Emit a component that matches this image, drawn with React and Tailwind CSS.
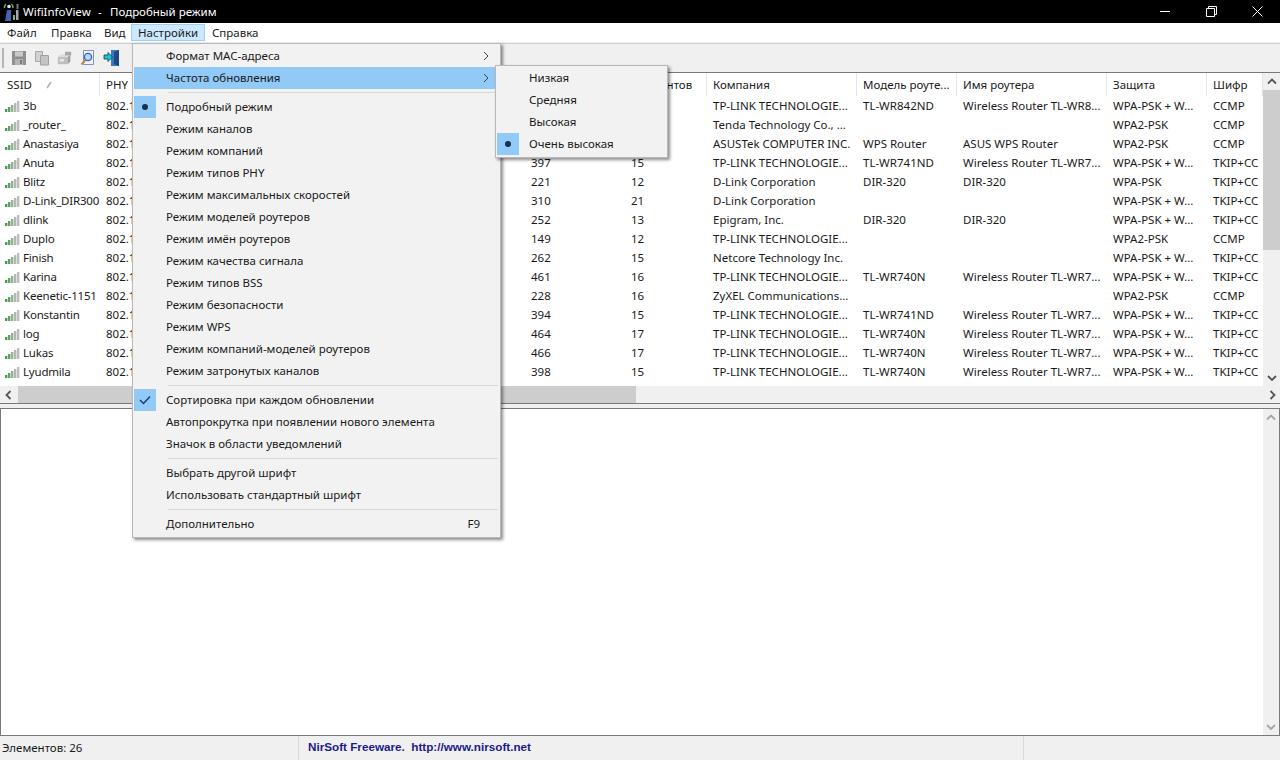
import React from 'react';

const rows = [
  ['3b','802.11n','', '', '', '', '', 'TP-LINK TECHNOLOGIE...','TL-WR842ND','Wireless Router TL-WR8...','WPA-PSK + W...','CCMP'],
  ['_router_','802.11n','', '', '', '', '', 'Tenda Technology Co., ...','','','WPA2-PSK','CCMP'],
  ['Anastasiya','802.11n','', '', '', '', '', 'ASUSTek COMPUTER INC.','WPS Router','ASUS WPS Router','WPA2-PSK','CCMP'],
  ['Anuta','802.11n','', '', '', '397','15','TP-LINK TECHNOLOGIE...','TL-WR741ND','Wireless Router TL-WR7...','WPA-PSK + W...','TKIP+CC'],
  ['Blitz','802.11n','', '', '', '221','12','D-Link Corporation','DIR-320','DIR-320','WPA-PSK','TKIP+CC'],
  ['D-Link_DIR300','802.11n','', '', '', '310','21','D-Link Corporation','','','WPA-PSK + W...','TKIP+CC'],
  ['dlink','802.11n','', '', '', '252','13','Epigram, Inc.','DIR-320','DIR-320','WPA-PSK + W...','TKIP+CC'],
  ['Duplo','802.11n','', '', '', '149','12','TP-LINK TECHNOLOGIE...','','','WPA2-PSK','CCMP'],
  ['Finish','802.11n','', '', '', '262','15','Netcore Technology Inc.','','','WPA-PSK + W...','TKIP+CC'],
  ['Karina','802.11n','', '', '', '461','16','TP-LINK TECHNOLOGIE...','TL-WR740N','Wireless Router TL-WR7...','WPA-PSK + W...','TKIP+CC'],
  ['Keenetic-1151','802.11n','', '', '', '228','16','ZyXEL Communications...','','','WPA2-PSK','CCMP'],
  ['Konstantin','802.11n','', '', '', '394','15','TP-LINK TECHNOLOGIE...','TL-WR741ND','Wireless Router TL-WR7...','WPA-PSK + W...','TKIP+CC'],
  ['log','802.11n','', '', '', '464','17','TP-LINK TECHNOLOGIE...','TL-WR740N','Wireless Router TL-WR7...','WPA-PSK + W...','TKIP+CC'],
  ['Lukas','802.11n','', '', '', '466','17','TP-LINK TECHNOLOGIE...','TL-WR740N','Wireless Router TL-WR7...','WPA-PSK + W...','TKIP+CC'],
  ['Lyudmila','802.11n','', '', '', '398','15','TP-LINK TECHNOLOGIE...','TL-WR740N','Wireless Router TL-WR7...','WPA-PSK + W...','TKIP+CC'],
];
const grid = 'grid grid-cols-[100px_100px_150px_75px_100px_100px_82px_150px_100px_150px_100px_56px]';
const headers = ['SSID','PHY','','','','','Элементов','Компания','Модель роуте...','Имя роутера','Защита','Шифр'];

const topMenu = [
  ['Файл','w-[44px] px-[7px]'],
  ['Правка','w-[53px] px-[7px]'],
  ['Вид','w-[34px] px-[7px]'],
  ['Настройки','w-[74px] px-[6px] h-[17px] flex items-center bg-[#cce8ff] border border-[#99d1ff]'],
  ['Справка','w-[60px] px-[7px]'],
];

const menu1 = [
  ['Формат MAC-адреса','arrow'],
  ['Частота обновления','arrow','hl'],
  'sep',
  ['Подробный режим','dot'],
  ['Режим каналов'],['Режим компаний'],['Режим типов PHY'],['Режим максимальных скоростей'],['Режим моделей роутеров'],['Режим имён роутеров'],['Режим качества сигнала'],['Режим типов BSS'],['Режим безопасности'],['Режим WPS'],['Режим компаний-моделей роутеров'],['Режим затронутых каналов'],
  'sep',
  ['Сортировка при каждом обновлении','check'],
  ['Автопрокрутка при появлении нового элемента'],
  ['Значок в области уведомлений'],
  'sep',
  ['Выбрать другой шрифт'],['Использовать стандартный шрифт'],
  'sep',
  ['Дополнительно','f9'],
];

function Signal() {
  const h = [3,5,7,9,11];
  const c = ['#4f9a55','#5fa064','#8fb592','#b5b5b5','#bdbdbd'];
  return (
    <svg width="15" height="12" viewBox="0 0 15 12" className="shrink-0">
      {h.map((v,i)=>(<rect key={i} x={i*3} y={12-v} width="2.4" height={v} fill={c[i]} />))}
    </svg>
  );
}
function Chevron({dir,c='#555555',cls=''}) {
  const d = {up:'M1 6.5l4-4 4 4',down:'M1 3l4 4 4-4',left:'M6.5 1L2.5 5l4 4',right:'M3.5 1l4 4-4 4'}[dir];
  return <svg width="10" height="10" viewBox="0 0 10 10" className={cls}><path d={d} fill="none" stroke={c} strokeWidth="1.8"/></svg>;
}
function Dot(){ return <span className="block w-[6px] h-[6px] rounded-full bg-[#1c2f4f]" />; }
function Check(){ return <svg width="12" height="10" viewBox="0 0 12 10"><path d="M1 5l3.5 3.5L11 1.5" fill="none" stroke="#1c3f70" strokeWidth="1.5"/></svg>; }
function MenuArrow(){ return <svg width="6" height="10" viewBox="0 0 6 10"><path d="M1 1l4 4-4 4" fill="none" stroke="#444" strokeWidth="1"/></svg>; }

function AppIcon(){
  return (
    <svg width="18" height="20" viewBox="0 0 18 20">
      <path d="M2.5 6a5 5 0 0 1 1.5-4M11 6a5 5 0 0 0-1.5-4" fill="none" stroke="#6fae6a" strokeWidth="1.4"/>
      <circle cx="7" cy="4.5" r="1.8" fill="#e2e2e2"/>
      <path d="M5 8h4v11H3z" fill="#3f67b0"/>
      <rect x="11" y="13" width="2" height="5" fill="#7fb37a"/>
      <rect x="14" y="8" width="2.5" height="10" fill="#a8a8a8"/>
      <rect x="14.5" y="2" width="2" height="5" fill="#777"/>
    </svg>
  );
}
function Tool({kind}){
  if(kind==='save') return <svg width="16" height="16" viewBox="0 0 16 16"><rect x="1" y="1" width="14" height="14" fill="#8f8f8f"/><rect x="4" y="1.5" width="8" height="5" fill="#c9c9c9"/><rect x="4" y="9" width="8" height="6" fill="#b4b4b4"/><rect x="9" y="10" width="2" height="4" fill="#7c7c7c"/></svg>;
  if(kind==='copy') return <svg width="16" height="16" viewBox="0 0 16 16"><path d="M1.5 1.5h7v10h-7z" fill="#d2d2d2" stroke="#a8a8a8"/><path d="M6.5 5.5h8v9.5h-8z" fill="#c4c4c4" stroke="#a0a0a0"/></svg>;
  if(kind==='prop') return <svg width="16" height="16" viewBox="0 0 18 16"><path d="M1 7h11v8H1z" fill="#bdbdbd"/><path d="M1 7l3-3h11l-3 3z" fill="#dadada"/><path d="M12 7l3-3v8l-3 3z" fill="#9e9e9e"/><rect x="9" y="1" width="7" height="4" fill="#a8a8a8"/><rect x="3" y="9" width="5" height="3" fill="#e4e4e4"/></svg>;
  if(kind==='find') return <svg width="16" height="16" viewBox="0 0 16 16"><path d="M3.5.5h10v14h-10z" fill="#eef3fb" stroke="#7a94c4"/><circle cx="8" cy="7" r="3.6" fill="#bcd6f5" stroke="#3a62b4" strokeWidth="1.3"/><path d="M5.5 10L1.5 14.5" stroke="#c8843a" strokeWidth="2"/></svg>;
  return <svg width="18" height="18" viewBox="0 0 18 18"><path d="M8 1h8v16H8z" fill="#3a78bd"/><path d="M11 3l5-2v16l-5-2z" fill="#1d4a86"/><path d="M1 6h4V3.5L9.5 8 5 12.5V10H1z" fill="#18c4d8" stroke="#0b3b44" strokeWidth=".8"/></svg>;
}

export default function App() {
  return (
    <div className="relative w-[1280px] h-[760px] overflow-hidden bg-white flex flex-col text-[11.5px] leading-[16px] text-[#1a1a1a] font-['Noto_Sans',sans-serif]">
      <div className="h-[23px] bg-black text-white flex items-center shrink-0">
        <div className="w-[23px] pl-[2px] flex items-center"><AppIcon /></div>
        <span className="w-[75px] whitespace-nowrap">WifiInfoView</span>
        <span className="w-[12px]">-</span>
        <span className="whitespace-nowrap">Подробный режим</span>
        <div className="ml-auto flex items-center h-full">
          <div className="w-[46px] flex justify-center"><span className="block w-[10px] h-px bg-white" /></div>
          <div className="w-[46px] flex justify-center">
            <svg width="11" height="11" viewBox="0 0 11 11"><path d="M.5 2.5h8v8h-8zM2.5 2.5v-2h8v8h-2" fill="none" stroke="white"/></svg>
          </div>
          <div className="w-[46px] flex justify-center">
            <svg width="11" height="11" viewBox="0 0 11 11"><path d="M.5.5l10 10M10.5.5l-10 10" stroke="white" fill="none"/></svg>
          </div>
        </div>
      </div>

      <div className="h-[20px] bg-white flex items-center shrink-0 border-b border-[#f0f0f0]">
        {topMenu.map(([m,c])=>(
          <div key={m} className={c}>{m}</div>
        ))}
      </div>

      <div className="h-[29px] bg-[#f0f0f0] border-t border-[#d0d0d0] flex items-center pl-[2px] gap-[7px] shrink-0">
        <span className="w-[2px] h-[20px] bg-[#b4b4b4]" />
        <Tool kind="save"/><Tool kind="copy"/><Tool kind="prop"/><Tool kind="find"/><Tool kind="exit"/>
      </div>

      <div className="h-[332px] border-y border-[#7a7a7a] flex flex-col shrink-0 bg-white">
        <div className="flex-1 flex min-h-0">
          <div className="flex-1 min-w-0 overflow-hidden">
            <div className={grid + ' h-[24px] items-start'}>
              {headers.map((h,i)=>(
                <div key={i} className={'h-[23px] flex items-center border-r border-[#e5e5e5] whitespace-nowrap overflow-hidden ' + (i===0 ? 'pl-[7px]' : 'pl-[6px]')}>
                  {h}
                  {i===0 && <svg width="8" height="8" viewBox="0 0 8 8" className="ml-[14px]"><path d="M1 7l4-6" stroke="#b0b0b0" strokeWidth="1.5"/></svg>}
                </div>
              ))}
            </div>
            {rows.map((r,ri)=>(
              <div key={ri} className={grid + ' h-[19px] items-start leading-[17px]'}>
                {r.map((c,i)=>(
                  <div key={i} className={'whitespace-nowrap overflow-hidden flex items-center ' + (i===0 ? 'pl-[5px] tracking-[-0.2px]' : 'pl-[6px]')}>
                    {i===0 && <span className="mr-[3px] flex"><Signal/></span>}
                    {c}
                  </div>
                ))}
              </div>
            ))}
          </div>
          <div className="w-[17px] bg-[#f0f0f0] flex flex-col shrink-0">
            <div className="h-[17px] flex items-center justify-center"><Chevron dir="up"/></div>
            <div className="h-[160px] bg-[#cdcdcd]" />
            <div className="flex-1" />
            <div className="h-[17px] flex items-center justify-center"><Chevron dir="down"/></div>
          </div>
        </div>
        <div className="h-[17px] bg-[#f0f0f0] flex items-center shrink-0">
          <div className="w-[18px] flex justify-center"><Chevron dir="left"/></div>
          <div className="w-[618px] h-full bg-[#cdcdcd]" />
          <div className="flex-1" />
          <div className="w-[17px] flex justify-center"><Chevron dir="right"/></div>
        </div>
      </div>

      <div className="h-[4px] bg-[#f0f0f0] shrink-0" />

      <div className="flex-1 border border-[#7a7a7a] flex justify-end min-h-0">
        <div className="w-[16px] bg-[#f0f0f0] flex flex-col justify-between">
          <div className="h-[17px] flex items-center justify-center"><Chevron dir="up" c="#a6a6a6"/></div>
          <div className="h-[17px] flex items-center justify-center"><Chevron dir="down" c="#a6a6a6"/></div>
        </div>
      </div>

      <div className="h-[24px] bg-[#f0f0f0] flex items-center shrink-0">
        <div className="w-[299px] pl-[2px] h-full flex items-center border-r border-[#d9d9d9]">Элементов: 26</div>
        <div className="pl-[9px] pb-[2px] text-[#1c1c8c] font-bold text-[11.7px] font-['Liberation_Sans',sans-serif]">NirSoft Freeware.&nbsp; http://www.nirsoft.net</div>
        <div className="ml-auto w-[257px] h-full border-l border-[#d9d9d9]" />
      </div>

      <div className="absolute left-[132px] top-[43px] w-[369px] h-[495px] bg-[#f2f2f2] border border-[#b8b8b8] p-[1px] shadow-[2px_2px_3px_rgba(0,0,0,0.45)]">
        {menu1.map((m,i)=> m==='sep' ? (
          <div key={i} className="h-[7px] flex items-center pl-[34px] pr-[1px]"><div className="h-px w-full bg-[#d7d7d7]" /></div>
        ) : (
          <div key={i} className={'h-[22px] flex items-center whitespace-nowrap ' + (m[2]==='hl' ? 'bg-[#91c9f7]' : '')}>
            <div className={'w-[22px] h-[22px] flex items-center justify-center mr-[10px] ' + (m[1]==='dot'||m[1]==='check' ? 'bg-[#91c9f7]' : '')}>
              {m[1]==='dot' && <Dot/>}
              {m[1]==='check' && <Check/>}
            </div>
            <span>{m[0]}</span>
            {m[1]==='arrow' && <span className="ml-auto mr-[10px] flex"><MenuArrow/></span>}
            {m[1]==='f9' && <span className="ml-auto mr-[19px]">F9</span>}
          </div>
        ))}
      </div>

      <div className="absolute left-[495px] top-[65px] w-[173px] h-[93px] bg-[#f2f2f2] border border-[#b8b8b8] p-[1px] shadow-[2px_2px_3px_rgba(0,0,0,0.45)]">
        {['Низкая','Средняя','Высокая','Очень высокая'].map((t,i)=>(
          <div key={t} className="h-[22px] flex items-center">
            <div className={'w-[22px] h-[22px] flex items-center justify-center mr-[10px] ' + (i===3 ? 'bg-[#91c9f7]' : '')}>{i===3 && <Dot/>}</div>
            <span>{t}</span>
          </div>
        ))}
      </div>
    </div>
  );
}
